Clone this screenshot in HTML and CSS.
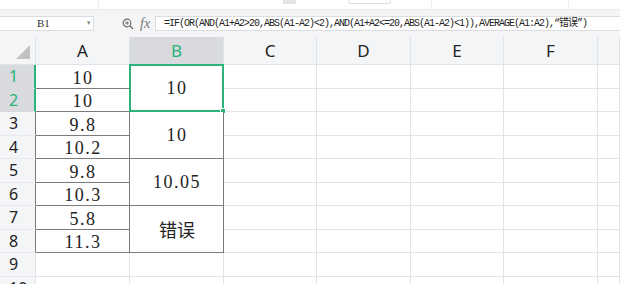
FILE: index.html
```html
<!DOCTYPE html>
<html lang="zh-CN">
  <head>
    <meta charset="UTF-8" />
    <title>WPS 表格</title>
    <link rel="stylesheet" href="styles.css">
  </head>
  <body>
    <!-- нижний край ленты -->
    <div class="ribbon">
      <div class="rgroup g1"></div>
      <div class="rgroup g2"><span class="rbox small"></span><span class="rbox wide"></span></div>
      <div class="rgroup g3"></div>
      <div class="rgroup g4"></div>
    </div>

    <!-- строка формул -->
    <div class="fbar">
      <div class="namebox">B1<span class="caret">▾</span></div>
      <div class="ficons">
        <svg class="zoomicon" width="12" height="12" viewBox="0 0 12 12">
          <circle cx="5" cy="5" r="3.8" fill="none" stroke="#6b6b6b" stroke-width="1.2" />
          <line x1="7.8" y1="7.8" x2="11" y2="11" stroke="#6b6b6b" stroke-width="1.4" />
          <line x1="3.2" y1="5" x2="6.8" y2="5" stroke="#6b6b6b" stroke-width="1" />
          <line x1="5" y1="3.2" x2="5" y2="6.8" stroke="#6b6b6b" stroke-width="1" />
        </svg>
        <span class="fx">fx</span>
      </div>
      <div class="finput">=IF(OR(AND(A1+A2&gt;20,ABS(A1-A2)&lt;2),AND(A1+A2&lt;=20,ABS(A1-A2)&lt;1)),AVERAGE(A1:A2),“错误”)</div>
    </div>

    <!-- лист -->
    <div class="sheet">
      <div class="hd corner"><span class="tri"></span></div>
      <div class="hd col">A</div>
      <div class="hd col sel">B</div>
      <div class="hd col">C</div>
      <div class="hd col">D</div>
      <div class="hd col">E</div>
      <div class="hd col">F</div>
      <div class="hd col"></div>

      <div class="hd row sel">1</div>
      <div class="c data a">10</div>
      <div class="c data b merged">10<span class="selbox"><span class="handle"></span></span></div>
      <div class="c"></div><div class="c"></div><div class="c"></div><div class="c"></div><div class="c"></div>

      <div class="hd row sel">2</div>
      <div class="c data a">10</div>
      <div class="c"></div><div class="c"></div><div class="c"></div><div class="c"></div><div class="c"></div>

      <div class="hd row dk">3</div>
      <div class="c data a">9.8</div>
      <div class="c data b merged">10</div>
      <div class="c"></div><div class="c"></div><div class="c"></div><div class="c"></div><div class="c"></div>

      <div class="hd row dk">4</div>
      <div class="c data a">10.2</div>
      <div class="c"></div><div class="c"></div><div class="c"></div><div class="c"></div><div class="c"></div>

      <div class="hd row dk">5</div>
      <div class="c data a">9.8</div>
      <div class="c data b merged">10.05</div>
      <div class="c"></div><div class="c"></div><div class="c"></div><div class="c"></div><div class="c"></div>

      <div class="hd row dk">6</div>
      <div class="c data a">10.3</div>
      <div class="c"></div><div class="c"></div><div class="c"></div><div class="c"></div><div class="c"></div>

      <div class="hd row dk">7</div>
      <div class="c data a">5.8</div>
      <div class="c data b merged cjk">错误</div>
      <div class="c"></div><div class="c"></div><div class="c"></div><div class="c"></div><div class="c"></div>

      <div class="hd row dk">8</div>
      <div class="c data a">11.3</div>
      <div class="c"></div><div class="c"></div><div class="c"></div><div class="c"></div><div class="c"></div>

      <div class="hd row">9</div>
      <div class="c"></div><div class="c"></div><div class="c"></div><div class="c"></div><div class="c"></div><div class="c"></div><div class="c"></div>

      <div class="hd row">10</div>
      <div class="c"></div><div class="c"></div><div class="c"></div><div class="c"></div><div class="c"></div><div class="c"></div><div class="c"></div>
    </div>
  </body>
</html>
```

FILE: styles.css
```css
/* Общие */
body {
  margin: 0;
  background-color: #fff;
  font-family: "Noto Sans", "Noto Sans CJK SC", sans-serif;
  overflow: hidden;
}

/* Лента */
.ribbon {
  display: flex;
  height: 9px;
  background-color: #fff;
  border-bottom: 1px solid #e9eaec;
}

.rgroup {
  height: 9px;
  border-right: 1px solid #ececee;
  display: flex;
}

.g1 { width: 98px; }
.g2 { width: 332px; }
.g3 { width: 136px; }
.g4 { flex: 1; border-right: none; }

.rbox {
  display: block;
  height: 3px;
  background-color: #eeeff1;
  border: 1px solid #dedfe2;
  border-top: none;
  border-radius: 0 0 2px 2px;
}

.rbox.small { width: 11px; margin-left: 184px; background-color: #e4e5e8; }
.rbox.wide { width: 41px; margin-left: 52px; background-color: #fff; }

/* Строка формул */
.fbar {
  display: flex;
  align-items: center;
  height: 27px;
  background-color: #f4f5f7;
}

.namebox {
  position: relative;
  box-sizing: border-box;
  width: 94px;
  height: 15px;
  padding-left: 37px;
  background-color: #fff;
  border: 1px solid #dcdde0;
  border-left: none;
  font-family: "Liberation Serif", serif;
  font-size: 11px;
  line-height: 13px;
  color: #333;
}

.caret {
  position: absolute;
  right: 2px;
  top: 0;
  font-size: 7px;
  color: #888;
}

.ficons {
  display: flex;
  align-items: center;
  width: 61px;
  padding-left: 28px;
  box-sizing: border-box;
  gap: 6px;
}

.fx {
  font-family: "Liberation Serif", serif;
  font-style: italic;
  font-size: 14px;
  color: #777;
  line-height: 14px;
}

.finput {
  flex: 1;
  box-sizing: border-box;
  height: 15px;
  padding-left: 8px;
  background-color: #fff;
  border: 1px solid #dcdde0;
  border-right: none;
  font-family: "Liberation Mono", "Noto Sans CJK SC", monospace;
  font-size: 10px;
  letter-spacing: -1px;
  line-height: 13px;
  color: #222;
  white-space: nowrap;
  overflow: hidden;
}

/* Лист */
.sheet {
  display: grid;
  grid-template-columns: 36px 94px 94px 93px 94px 93px 94px 1fr;
  grid-template-rows: 28px repeat(10, 23.5px);
}

.hd {
  box-sizing: border-box;
  background-color: #f4f5f7;
  border-right: 1px solid #dfe2e8;
  border-bottom: 1px solid #dfe2e8;
  color: #222;
}

.col {
  display: flex;
  align-items: center;
  justify-content: center;
  font-size: 17px;
}

.row {
  display: flex;
  align-items: center;
  padding-left: 9px;
  font-size: 16px;
  border-bottom-color: #e6e8ec;
}

.corner {
  position: relative;
}

.tri {
  position: absolute;
  left: 16px;
  top: 8px;
  width: 0;
  height: 0;
  border-left: 14px solid transparent;
  border-bottom: 14px solid #c1c2c4;
}

.hd.sel {
  background-color: #d8dadd;
  color: #2bb37a;
}

.row.sel {
  border-right: 2px solid #2bb37a;
  border-bottom-color: #d8dadd;
}

.row.dk {
  border-right: 1px solid #7b7b7b;
}

.c {
  box-sizing: border-box;
  border-right: 1px solid #e0e3ea;
  border-bottom: 1px solid #e0e3ea;
  background-color: #fff;
}

.data {
  display: flex;
  justify-content: center;
  padding-left: 1px;
  font-family: "Liberation Serif", "Noto Sans CJK SC", serif;
  font-size: 18px;
  letter-spacing: 1.5px;
  color: #222;
  border-right-color: #7b7b7b;
  border-bottom-color: #7b7b7b;
}

.data.a {
  align-items: flex-end;
  line-height: 18px;
  padding-bottom: 1px;
}

.data.merged {
  position: relative;
  grid-row: span 2;
  align-items: center;
}

.data.cjk {
  font-family: "Noto Sans CJK SC", sans-serif;
  font-size: 18px;
  letter-spacing: 0;
}

/* Рамка выделения */
.selbox {
  position: absolute;
  left: -1px;
  top: -1px;
  right: -1px;
  bottom: -1px;
  border: 2px solid #2bb37a;
}

.handle {
  position: absolute;
  right: -4px;
  bottom: -4px;
  width: 4px;
  height: 4px;
  background-color: #2bb37a;
  border: 1px solid #fff;
}
```
